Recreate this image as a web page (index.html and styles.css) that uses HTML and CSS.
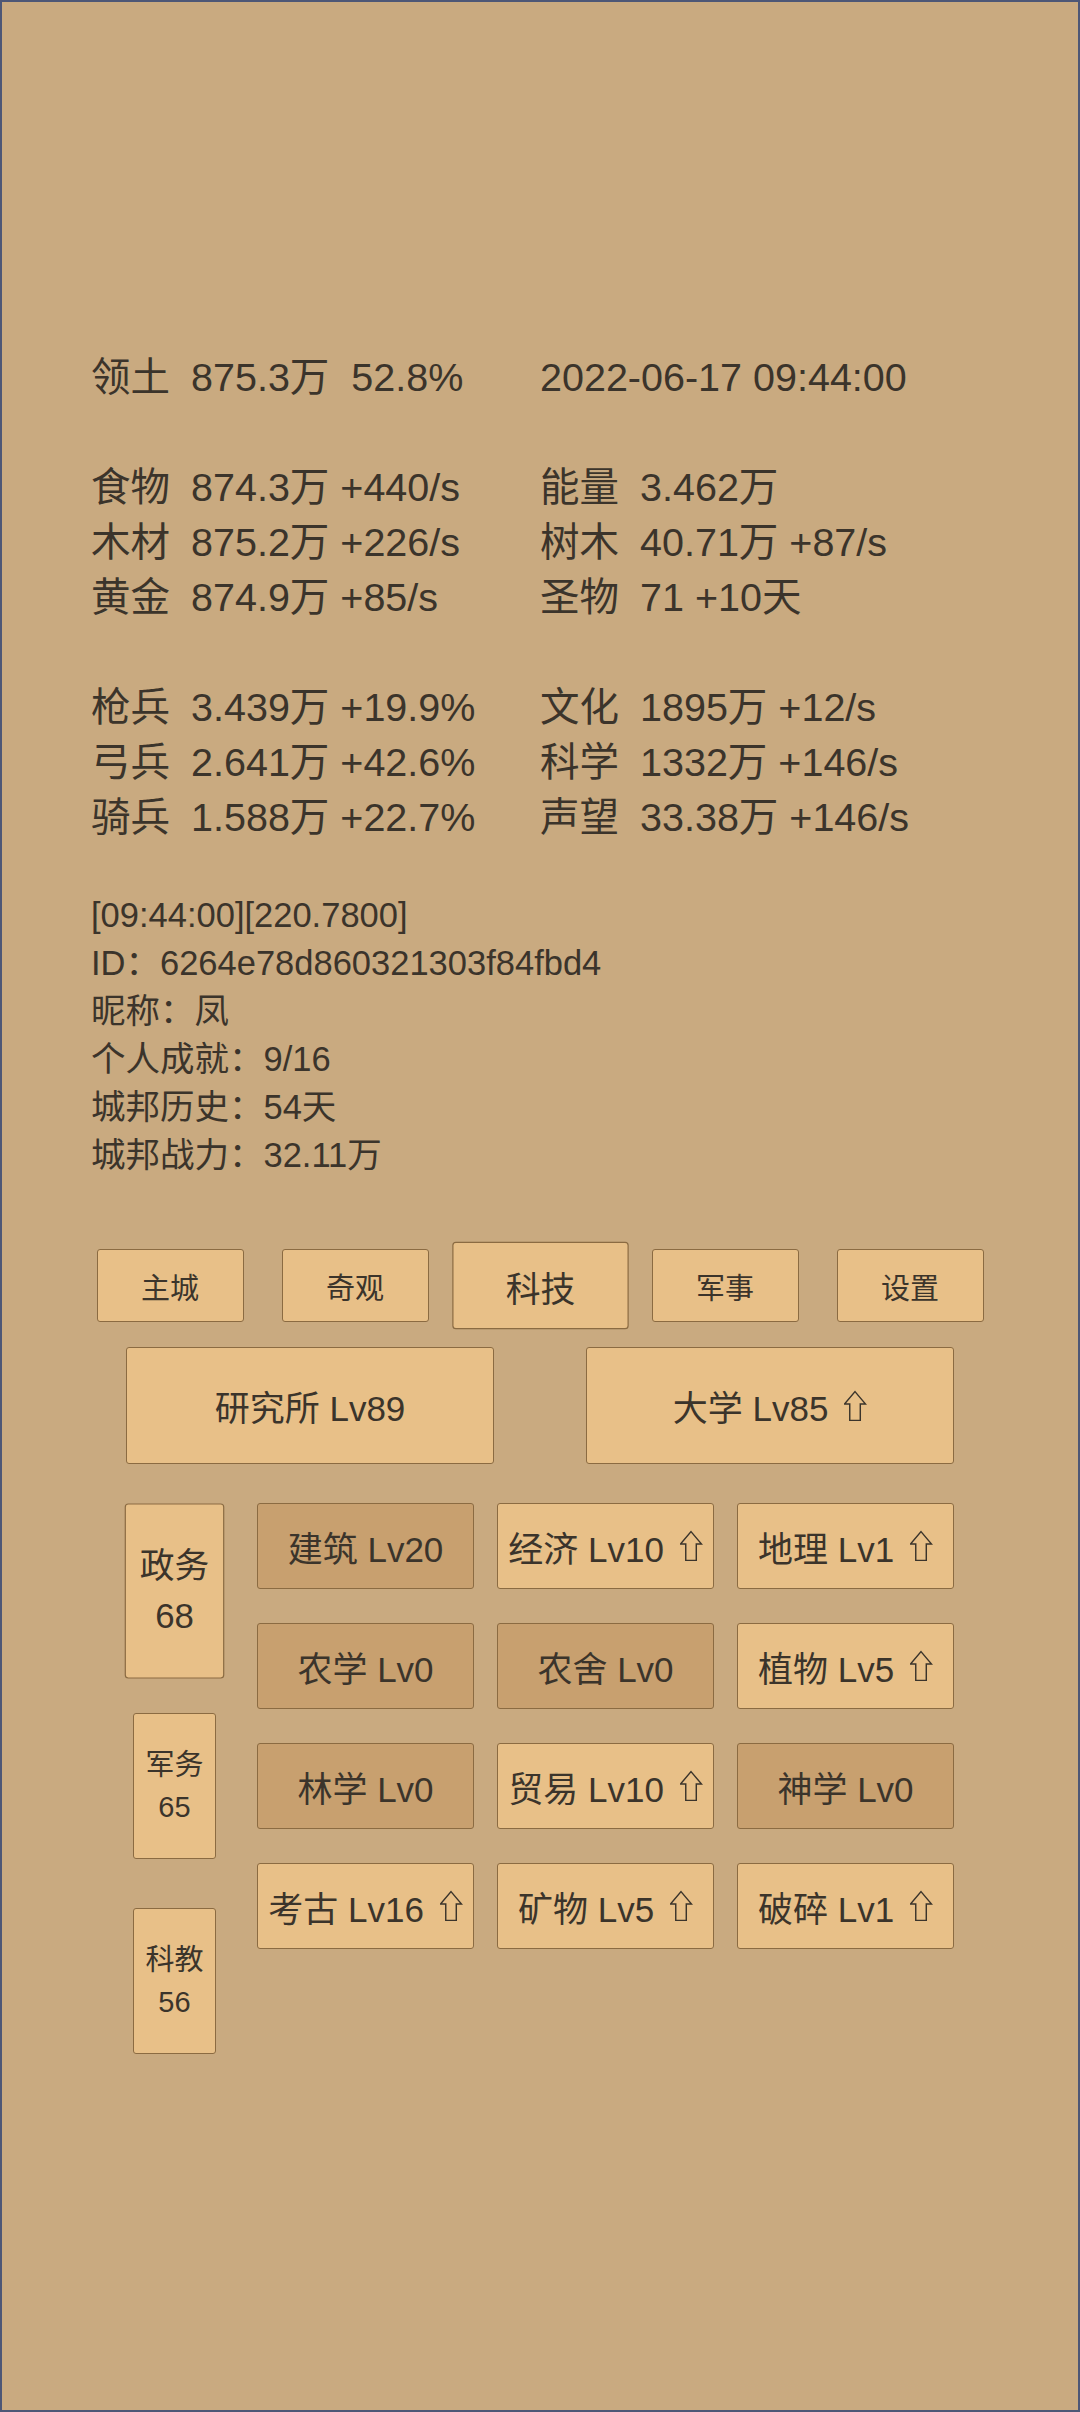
FILE: index.html
```html
<!DOCTYPE html>
<html lang="zh">
<head>
  <meta charset="UTF-8" />
  <meta name="viewport" content="width=device-width, initial-scale=1" />
  <title>城邦</title>
  <link rel="stylesheet" href="styles.css">
</head>
<body>
<div class="ecran">

  <!-- RESSOURCES -->
  <div class="stats">
    <div class="ligne">
      <div><span class="lib">领土</span><span class="val">875.3万  52.8%</span></div>
      <div><span class="val">2022-06-17 09:44:00</span></div>
    </div>
    <div class="vide"></div>
    <div class="ligne">
      <div><span class="lib">食物</span><span class="val">874.3万 +440/s</span></div>
      <div><span class="lib">能量</span><span class="val">3.462万</span></div>
    </div>
    <div class="ligne">
      <div><span class="lib">木材</span><span class="val">875.2万 +226/s</span></div>
      <div><span class="lib">树木</span><span class="val">40.71万 +87/s</span></div>
    </div>
    <div class="ligne">
      <div><span class="lib">黄金</span><span class="val">874.9万 +85/s</span></div>
      <div><span class="lib">圣物</span><span class="val">71 +10天</span></div>
    </div>
    <div class="vide"></div>
    <div class="ligne">
      <div><span class="lib">枪兵</span><span class="val">3.439万 +19.9%</span></div>
      <div><span class="lib">文化</span><span class="val">1895万 +12/s</span></div>
    </div>
    <div class="ligne">
      <div><span class="lib">弓兵</span><span class="val">2.641万 +42.6%</span></div>
      <div><span class="lib">科学</span><span class="val">1332万 +146/s</span></div>
    </div>
    <div class="ligne">
      <div><span class="lib">骑兵</span><span class="val">1.588万 +22.7%</span></div>
      <div><span class="lib">声望</span><span class="val">33.38万 +146/s</span></div>
    </div>
  </div>

  <!-- INFOS -->
  <div class="infos">
    <div>[09:44:00][220.7800]</div>
    <div>ID：6264e78d860321303f84fbd4</div>
    <div>昵称：凤</div>
    <div>个人成就：9/16</div>
    <div>城邦历史：54天</div>
    <div>城邦战力：32.11万</div>
  </div>

  <!-- ONGLETS -->
  <div class="onglets">
    <div class="onglet">主城</div>
    <div class="onglet">奇观</div>
    <div class="onglet actif">科技</div>
    <div class="onglet">军事</div>
    <div class="onglet">设置</div>
  </div>

  <!-- BATIMENTS -->
  <div class="batiments">
    <div class="batiment">研究所 Lv89</div>
    <div class="batiment">大学 Lv85 <svg class="fleche" viewBox="0 0 24 32"><path d="M11.5 1 L22.5 14 L17 14 L17 31 L6 31 L6 14 L0.5 14 Z"/></svg></div>
  </div>

  <!-- TECHNOLOGIES -->
  <div class="techno">
    <div class="secteurs">
      <div class="secteur actif">政务<br>68</div>
      <div class="secteur">军务<br>65</div>
      <div class="secteur">科教<br>56</div>
    </div>
    <div class="grille" id="grille"></div>
  </div>

</div>

<script>
  const techs = [
    { nom: "建筑", lv: 20, up: false },
    { nom: "经济", lv: 10, up: true },
    { nom: "地理", lv: 1, up: true },
    { nom: "农学", lv: 0, up: false },
    { nom: "农舍", lv: 0, up: false },
    { nom: "植物", lv: 5, up: true },
    { nom: "林学", lv: 0, up: false },
    { nom: "贸易", lv: 10, up: true },
    { nom: "神学", lv: 0, up: false },
    { nom: "考古", lv: 16, up: true },
    { nom: "矿物", lv: 5, up: true },
    { nom: "破碎", lv: 1, up: true }
  ];

  const fleche = '<svg class="fleche" viewBox="0 0 24 32"><path d="M11.5 1 L22.5 14 L17 14 L17 31 L6 31 L6 14 L0.5 14 Z"/></svg>';
  const grille = document.getElementById('grille');
  techs.forEach(t => {
    const div = document.createElement('div');
    div.className = t.up ? 'case' : 'case sombre';
    div.innerHTML = t.nom + ' Lv' + t.lv + (t.up ? ' ' + fleche : '');
    grille.appendChild(div);
  });
</script>
</body>
</html>
```

FILE: styles.css
```css
body {
  margin: 0;
  background: #c9aa80;
  color: #3b342b;
  font-family: "Liberation Sans", "Noto Sans CJK SC", sans-serif;
}

.ecran {
  box-sizing: border-box;
  height: 100vh;
  border: 2px solid #4d5776;
  padding-top: 348px;
  overflow: hidden;
}

.stats {
  padding-left: 89px;
  font-size: 39.5px;
  line-height: 55px;
}

.ligne {
  display: grid;
  grid-template-columns: 449px 1fr;
  height: 55px;
}

.vide {
  height: 55px;
}

.lib {
  display: inline-block;
  width: 100px;
}

.val {
  white-space: pre;
}

.infos {
  margin-top: 46px;
  padding-left: 89px;
  font-size: 34.5px;
  line-height: 48px;
}

.onglets {
  display: flex;
  justify-content: center;
  gap: 38px;
  margin-top: 70px;
}

.onglet,
.batiment,
.secteur,
.case {
  box-sizing: border-box;
  display: flex;
  align-items: center;
  justify-content: center;
  text-align: center;
  background: #e8c088;
  border: 1px solid #8b6b42;
  border-radius: 3px;
}

.onglet {
  width: 147px;
  height: 73px;
  font-size: 29px;
}

.actif {
  transform: scale(1.2);
}

.batiments {
  display: flex;
  justify-content: center;
  gap: 92px;
  margin-top: 25px;
}

.batiment {
  width: 368px;
  height: 117px;
  font-size: 35px;
  white-space: pre;
}

.techno {
  display: flex;
  margin-top: 39px;
  padding-left: 131px;
}

.secteurs {
  display: flex;
  flex-direction: column;
  gap: 49px;
  width: 83px;
  padding-top: 15px;
}

.secteur {
  height: 146px;
  font-size: 29px;
  line-height: 42px;
}

.grille {
  display: grid;
  grid-template-columns: repeat(3, 217px);
  grid-auto-rows: 86px;
  column-gap: 23px;
  row-gap: 34px;
  margin-left: 41px;
}

.case {
  font-size: 35px;
  white-space: pre;
}

.case.sombre {
  background: #c8a06f;
}

.fleche {
  width: 23px;
  height: 32px;
  margin-left: 6px;
  fill: none;
  stroke: #3b342b;
  stroke-width: 1.5;
}
```
